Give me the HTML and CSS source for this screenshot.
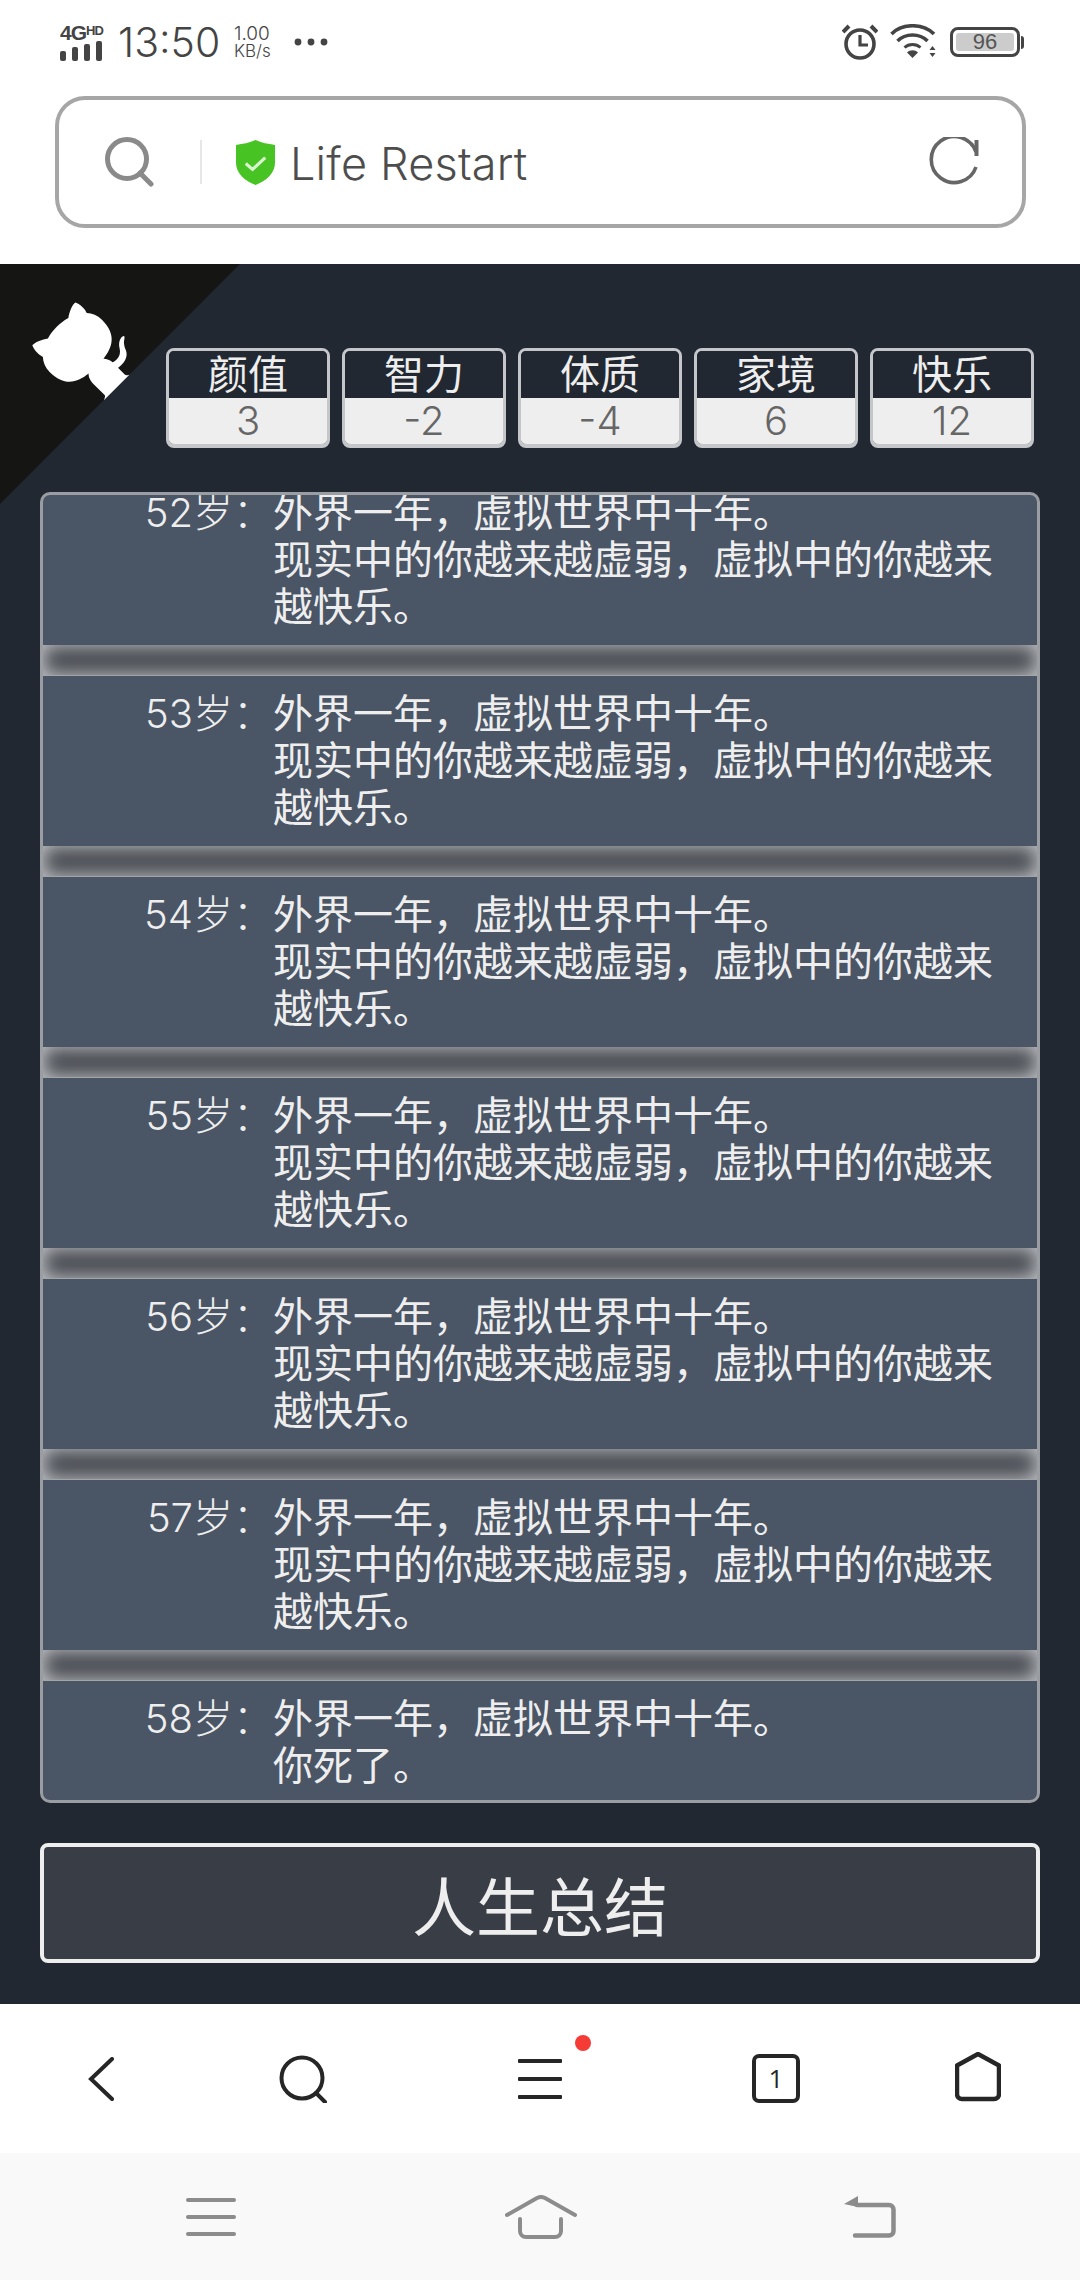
FILE: index.html
```html
<!DOCTYPE html>
<html lang="zh-CN">
<head>
  <meta charset="UTF-8" />
  <meta name="viewport" content="width=device-width, initial-scale=1.0" />
  <title>Life Restart</title>
  <link rel="stylesheet" href="styles.css">
</head>
<body>
  <header class="browser-top">
    <div class="status-bar">
      <div class="signal">
        <div class="signal-label">4G<small>HD</small></div>
        <div class="signal-bars"><i></i><i></i><i></i><i></i></div>
      </div>
      <span class="clock">13:50</span>
      <div class="speed"><span>1.00</span><span>KB/s</span></div>
      <svg class="dots" width="34" height="8" viewBox="0 0 34 8"><circle cx="4" cy="4" r="3.4"/><circle cx="17" cy="4" r="3.4"/><circle cx="30" cy="4" r="3.4"/></svg>
      <div class="status-right">
        <svg width="36" height="36" viewBox="0 0 36 36" fill="none" stroke="#444" stroke-width="3.6"><circle cx="18" cy="20" r="14"/><path d="M18 11v10h8" stroke-width="3.2"/><path d="M1 8 7 2M35 8l-6-6" stroke-width="4"/></svg>
        <svg width="48" height="36" viewBox="0 0 48 36" fill="none" stroke="#444" stroke-width="3.6"><path d="M1.500 10C12-1 33-1 44 10"/><path d="M7.500 17c8-8 22-8 30 0"/><path d="M14.500 23.500c4.500-4 11.500-4 16 0" stroke-width="3"/><path d="M17 28.500c3-3 8-3 11 0l-5.500 5.500z" fill="#444" stroke="none"/><path d="M42.500 22l3 4h-6zM39.500 29h6l-3 4z" fill="#444" stroke="none"/></svg>
        <div class="battery"><div class="battery-level">96</div></div>
      </div>
    </div>
    <div class="address-bar">
      <svg class="address-search" width="50" height="50" viewBox="0 0 50 50" fill="none" stroke="#8a8a8a" stroke-width="5"><circle cx="22" cy="22" r="19.500"/><path d="m35 36 11 11" stroke-linecap="round"/></svg>
      <div class="address-sep"></div>
      <svg class="shield" width="41" height="45" viewBox="0 0 42 46"><path d="M21 0c6 3 13 4 20 5v18c0 11-9 19-20 23C10 42 1 34 1 23V5c7-1 14-2 20-5z" fill="#47c423"/><path d="m11 24 7 6 13-12" fill="none" stroke="#d9f5cf" stroke-width="3.200"/></svg>
      <span class="address-text">Life Restart</span>
      <svg class="reload" width="50" height="50" viewBox="0 0 50 50" fill="none" stroke="#666" stroke-width="3.600"><path d="M47 30A23 23 0 1 1 47 15"/><path d="M47.500 3v16" stroke-width="4"/></svg>
    </div>
  </header>

  <main class="game">
    <a class="corner">
      <svg width="240" height="240" viewBox="0 0 250 250">
        <g transform="translate(250 0) scale(-1 1)">
          <path fill="#151513" d="M0,0 L115,115 L130,115 L142,142 L250,250 L250,0 Z"/>
          <path fill="#fff" d="M128.3,109.0 C113.8,99.7 119.0,89.6 119.0,89.6 C122.0,82.7 120.5,78.6 120.5,78.6 C119.2,72.0 123.4,76.3 123.4,76.3 C127.3,80.9 125.5,87.3 125.5,87.3 C122.9,97.6 130.6,101.9 134.4,103.2"/>
          <path fill="#fff" d="M115.0,115.0 C114.9,115.1 118.7,116.5 119.8,115.4 L133.7,101.6 C136.9,99.2 139.9,98.4 142.2,98.6 C133.8,88.0 127.5,74.4 143.8,58.0 C148.5,53.4 154.0,51.2 159.7,51.0 C160.3,49.4 163.2,43.6 171.4,40.1 C171.4,40.1 176.1,42.5 178.8,56.2 C183.1,58.6 187.2,61.8 190.9,65.4 C194.5,69.0 197.7,73.2 200.1,77.6 C213.8,80.2 216.3,84.9 216.3,84.9 C212.7,93.1 206.9,96.0 205.4,96.6 C205.1,102.4 203.0,107.8 198.3,112.5 C181.9,128.9 168.3,122.5 157.7,114.1 C157.9,116.9 156.7,120.9 152.7,124.9 L141.0,136.5 C139.8,137.7 141.6,141.9 141.8,141.8 Z"/>
        </g>
      </svg>
    </a>

    <div class="stats">
      <div class="stat"><div class="stat-name">颜值</div><div class="stat-value">3</div></div>
      <div class="stat"><div class="stat-name">智力</div><div class="stat-value">-2</div></div>
      <div class="stat"><div class="stat-name">体质</div><div class="stat-value">-4</div></div>
      <div class="stat"><div class="stat-name">家境</div><div class="stat-value">6</div></div>
      <div class="stat"><div class="stat-name">快乐</div><div class="stat-value">12</div></div>
    </div>

    <div class="log">
      <ul class="log-list">
        <li class="log-row"><span class="age">52岁：</span><div class="events"><p>外界一年，虚拟世界中十年。</p><p>现实中的你越来越虚弱，虚拟中的你越来越快乐。</p></div></li>
        <li class="log-row"><span class="age">53岁：</span><div class="events"><p>外界一年，虚拟世界中十年。</p><p>现实中的你越来越虚弱，虚拟中的你越来越快乐。</p></div></li>
        <li class="log-row"><span class="age">54岁：</span><div class="events"><p>外界一年，虚拟世界中十年。</p><p>现实中的你越来越虚弱，虚拟中的你越来越快乐。</p></div></li>
        <li class="log-row"><span class="age">55岁：</span><div class="events"><p>外界一年，虚拟世界中十年。</p><p>现实中的你越来越虚弱，虚拟中的你越来越快乐。</p></div></li>
        <li class="log-row"><span class="age">56岁：</span><div class="events"><p>外界一年，虚拟世界中十年。</p><p>现实中的你越来越虚弱，虚拟中的你越来越快乐。</p></div></li>
        <li class="log-row"><span class="age">57岁：</span><div class="events"><p>外界一年，虚拟世界中十年。</p><p>现实中的你越来越虚弱，虚拟中的你越来越快乐。</p></div></li>
        <li class="log-row"><span class="age">58岁：</span><div class="events"><p>外界一年，虚拟世界中十年。</p><p>你死了。</p></div></li>
      </ul>
    </div>

    <button class="summary-btn">人生总结</button>
  </main>

  <nav class="browser-nav">
    <svg width="26" height="44" viewBox="0 0 26 44" fill="none" stroke="#262626" stroke-width="4" stroke-linecap="round"><path d="M24 2 3 22l21 20"/></svg>
    <svg width="48" height="48" viewBox="0 0 48 48" fill="none" stroke="#262626" stroke-width="4"><circle cx="23" cy="23" r="20.500"/><path d="m37 38 9 9" stroke-linecap="round"/></svg>
    <div class="menu-icon">
      <svg width="44" height="40" viewBox="0 0 44 40" fill="#262626"><rect y="0" width="44" height="4" rx="1"/><rect y="18" width="44" height="4" rx="1"/><rect y="36" width="44" height="4" rx="1"/></svg>
      <span class="red-dot"></span>
    </div>
    <div class="tab-count">1</div>
    <svg class="home-icon" width="46" height="50" viewBox="0 0 46 50" fill="none" stroke="#262626" stroke-width="4.500" stroke-linejoin="round"><path d="M23 2 44 13.500V42a5 5 0 0 1-5 5H7a5 5 0 0 1-5-5V13.500z"/></svg>
  </nav>

  <nav class="system-nav">
    <svg width="50" height="38" viewBox="0 0 50 38" fill="#8c8c8c"><rect y="0" width="50" height="4" rx="2"/><rect y="17" width="50" height="4" rx="2"/><rect y="34" width="50" height="4" rx="2"/></svg>
    <svg width="72" height="44" viewBox="0 0 72 44" fill="none" stroke="#8c8c8c" stroke-width="4" stroke-linecap="round"><path d="M2 20 32 3c2.500-1.300 5.500-1.300 8 0L70 20"/><path d="M15 24v12a6 6 0 0 0 6 6h29a6 6 0 0 0 6-6V24"/></svg>
    <svg width="52" height="42" viewBox="0 0 52 42" fill="none" stroke="#8c8c8c" stroke-width="4.500" stroke-linecap="round"><path d="M13 9h32a4.500 4.500 0 0 1 4.500 4.500V35a4.500 4.500 0 0 1-4.500 4.500H11"/><path d="M14 0 0 8l14 3z" fill="#8c8c8c" stroke="none"/></svg>
  </nav>
</body>
</html>
```

FILE: styles.css
```css
* {
  box-sizing: border-box;
  margin: 0;
  padding: 0;
}
body {
  width: 1080px;
  height: 2280px;
  overflow: hidden;
  font-family: "Inter", "Noto Sans CJK SC", sans-serif;
  background: #f9f9f9;
}
svg {
  display: block;
  flex: none;
}

/* browser chrome */
.browser-top {
  height: 264px;
  background: #fff;
  color: #444;
}
.status-bar {
  height: 96px;
  padding: 0 60px 12px 60px;
  display: flex;
  align-items: center;
}
.signal {
  width: 46px;
  margin-right: 12px;
}
.signal-label {
  font-family: "Liberation Sans", sans-serif;
  font-weight: 700;
  font-size: 21px;
  line-height: 16px;
  letter-spacing: -1px;
  white-space: nowrap;
}
.signal-label small {
  font-size: 13px;
  vertical-align: 5px;
}
.signal-bars {
  display: flex;
  align-items: flex-end;
  gap: 6px;
  height: 20px;
}
.signal-bars i {
  width: 6px;
  border-radius: 2px;
  background: #444;
}
.signal-bars i:nth-child(1) { height: 10px; }
.signal-bars i:nth-child(2) { height: 14px; }
.signal-bars i:nth-child(3) { height: 17px; }
.signal-bars i:nth-child(4) { height: 20px; }
.clock {
  font-size: 41px;
  font-weight: 300;
  width: 116px;
}
.speed {
  display: flex;
  flex-direction: column;
  font-size: 17px;
  line-height: 17px;
  font-weight: 300;
  width: 60px;
}
.speed span:first-child {
  font-size: 19px;
  line-height: 19px;
}
.dots {
  fill: #444;
}
.status-right {
  margin-left: auto;
  display: flex;
  align-items: center;
  gap: 12px;
}
.battery {
  width: 70px;
  height: 30px;
  padding: 3px;
  border: 3px solid #444;
  border-radius: 8px;
  position: relative;
}
.battery::after {
  content: "";
  position: absolute;
  right: -7px;
  top: 6px;
  width: 3px;
  height: 13px;
  background: #444;
  border-radius: 0 3px 3px 0;
}
.battery-level {
  height: 100%;
  background: #ccc;
  border-radius: 3px;
  font-family: "Liberation Sans", sans-serif;
  font-size: 22px;
  line-height: 18px;
  text-align: center;
  color: #555;
}
.address-bar {
  height: 132px;
  margin: 0 54px 0 55px;
  border: 4px solid #a6a6a6;
  border-radius: 30px;
  display: flex;
  align-items: center;
  padding: 0 43px 0 46px;
}
.address-search {
  margin-right: 45px;
}
.address-sep {
  width: 2px;
  height: 44px;
  background: #e6e6e6;
  margin-right: 33px;
}
.shield {
  margin-right: 14px;
}
.address-text {
  font-size: 45px;
  font-weight: 300;
  letter-spacing: 0.2px;
  color: #4d4d4d;
  padding-top: 3px;
}
.reload {
  margin-left: auto;
}

/* game area */
.game {
  height: 1740px;
  background: #222831;
  position: relative;
  padding: 84px 40px 0;
  color: #eee;
}
.corner {
  position: absolute;
  top: 0;
  left: 0;
}
.stats {
  display: flex;
  gap: 12px;
  margin: 0 -4px 44px 126px;
}
.stat {
  width: 164px;
  height: 100px;
  border: 3px solid #c4c6ca;
  border-bottom-width: 4px;
  border-radius: 8px;
  overflow: hidden;
  text-align: center;
  display: flex;
  flex-direction: column;
}
.stat-name {
  height: 47px;
  font-size: 40px;
  line-height: 47px;
  background: #222831;
}
.stat-value {
  flex: 1;
  font-size: 40px;
  font-weight: 300;
  line-height: 46px;
  background: #eee;
  color: #666;
}
.log {
  height: 1311px;
  border: 3px solid #9a9da1;
  border-radius: 10px;
  background: #4a5565;
  overflow: hidden;
  margin-bottom: 40px;
}
.log-list {
  list-style: none;
  margin-top: -20px;
}
.log-row {
  display: grid;
  grid-template-columns: 230px 1fr;
  padding-top: 14px;
  font-size: 40px;
  line-height: 47px;
}
.log-row::after {
  content: "";
  grid-column: 1 / -1;
  height: 30px;
  margin-top: 15px;
  background: #45484f;
  box-shadow: inset 0 0 20px #d0d2d4;
  border-bottom: 1px solid #a2a4a8;
}
.log-row:last-child::after {
  display: none;
}
.age {
  text-align: right;
  font-weight: 300;
}
.events {
  padding-right: 30px;
}
.summary-btn {
  display: block;
  width: 1000px;
  height: 120px;
  border: 4px solid #eee;
  border-radius: 8px;
  background: #393e46;
  color: #eee;
  font-family: inherit;
  font-size: 64px;
}

/* bottom bars */
.browser-nav {
  height: 149px;
  background: #fff;
  display: grid;
  grid-template-columns: 202px 202px 272px 200px 204px;
  justify-items: center;
  align-items: center;
}
.menu-icon {
  position: relative;
}
.red-dot {
  position: absolute;
  left: 57px;
  top: -24px;
  width: 16px;
  height: 16px;
  border-radius: 50%;
  background: #f53b36;
}
.tab-count {
  width: 48px;
  height: 49px;
  border: 4.500px solid #262626;
  border-radius: 7px;
  font-size: 26px;
  font-family: "Open Sans", sans-serif;
  line-height: 40px;
  text-align: center;
  color: #262626;
}
.home-icon {
  margin-bottom: 3px;
}
.system-nav {
  height: 127px;
  background: #f9f9f9;
  display: grid;
  grid-template-columns: 422px 238px 420px;
  justify-items: center;
  align-items: center;
}
```
